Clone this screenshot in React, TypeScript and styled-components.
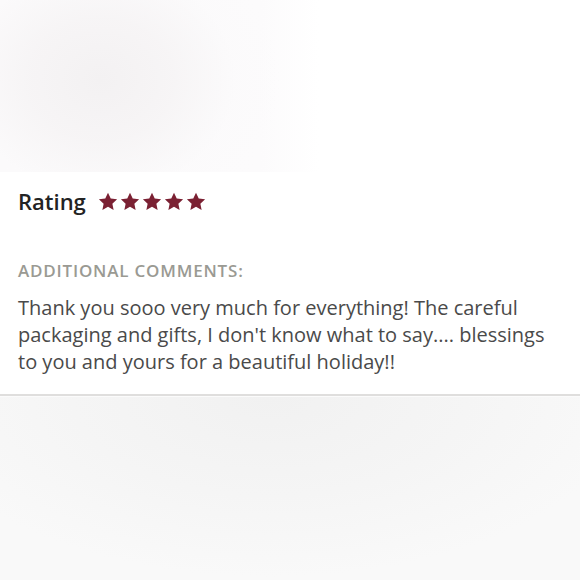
import React from "react";
import styled, { createGlobalStyle } from "styled-components";

const Global = createGlobalStyle`
  html, body { margin: 0; padding: 0; background: #ffffff; }
  body { width: 580px; height: 580px; overflow: hidden; font-family: "Open Sans", "Lato", sans-serif; }
`;

const Page = styled.div`
  width: 580px;
  height: 580px;
  display: flex;
  flex-direction: column;
  background: #ffffff;
`;

const TopBlur = styled.div`
  height: 172px;
  flex: none;
  background:
    radial-gradient(ellipse 180px 150px at 100px 80px, rgba(243,241,242,1) 0%, rgba(246,244,245,0.9) 40%, rgba(251,250,251,0.6) 75%, rgba(255,255,255,0) 100%),
    linear-gradient(90deg, #fbfafb 0%, #fcfbfc 45%, #ffffff 55%);
`;

const Card = styled.section`
  flex: none;
  height: 224px;
  padding: 13px 18px 0;
  box-sizing: border-box;
  border-bottom: 2px solid #dfdedd;
  display: flex;
  flex-direction: column;
`;

const RatingRow = styled.div`
  display: flex;
  align-items: center;
  gap: 12px;
  height: 32px;
`;

const RatingLabel = styled.span`
  font-size: 22px;
  font-weight: 600;
  color: #232323;
`;

const Stars = styled.div`
  display: flex;
  gap: 2px;
`;

const SectionLabel = styled.div`
  margin-top: 42px;
  font-size: 17px;
  font-weight: 600;
  color: #9a9a93;
  letter-spacing: 0.8px;
  text-transform: uppercase;
`;

const Comment = styled.p`
  margin: 12px 0 0;
  font-size: 20px;
  line-height: 27px;
  color: #4a4a4a;
  font-weight: 400;
`;

const BottomBlur = styled.div`
  flex: 1;
  border-top: 1px solid #fbfbfb;
  background:
    radial-gradient(ellipse 360px 180px at 270px 0px, rgba(241,241,241,1) 0%, rgba(245,245,245,1) 55%, rgba(249,249,249,0) 100%),
    #f9f9f9;
`;

const Star = () => (
  <svg width="20" height="19" viewBox="0 0 24 23">
    <path
      d="M12 0.8l3.3 7.1 7.7 0.9-5.7 5.3 1.5 7.7L12 17.9l-6.8 3.9 1.5-7.7L1 8.8l7.7-0.9z"
      fill="#7b2133"
    />
  </svg>
);

export default function App() {
  return (
    <>
      <Global />
      <Page>
        <TopBlur />
        <Card>
          <RatingRow>
            <RatingLabel>Rating</RatingLabel>
            <Stars>
              {[0, 1, 2, 3, 4].map((i) => (
                <Star key={i} />
              ))}
            </Stars>
          </RatingRow>
          <SectionLabel>Additional comments:</SectionLabel>
          <Comment>
            Thank you sooo very much for everything! The careful packaging and gifts, I don't know what to say.... blessings to you and yours for a beautiful holiday!!
          </Comment>
        </Card>
        <BottomBlur />
      </Page>
    </>
  );
}
